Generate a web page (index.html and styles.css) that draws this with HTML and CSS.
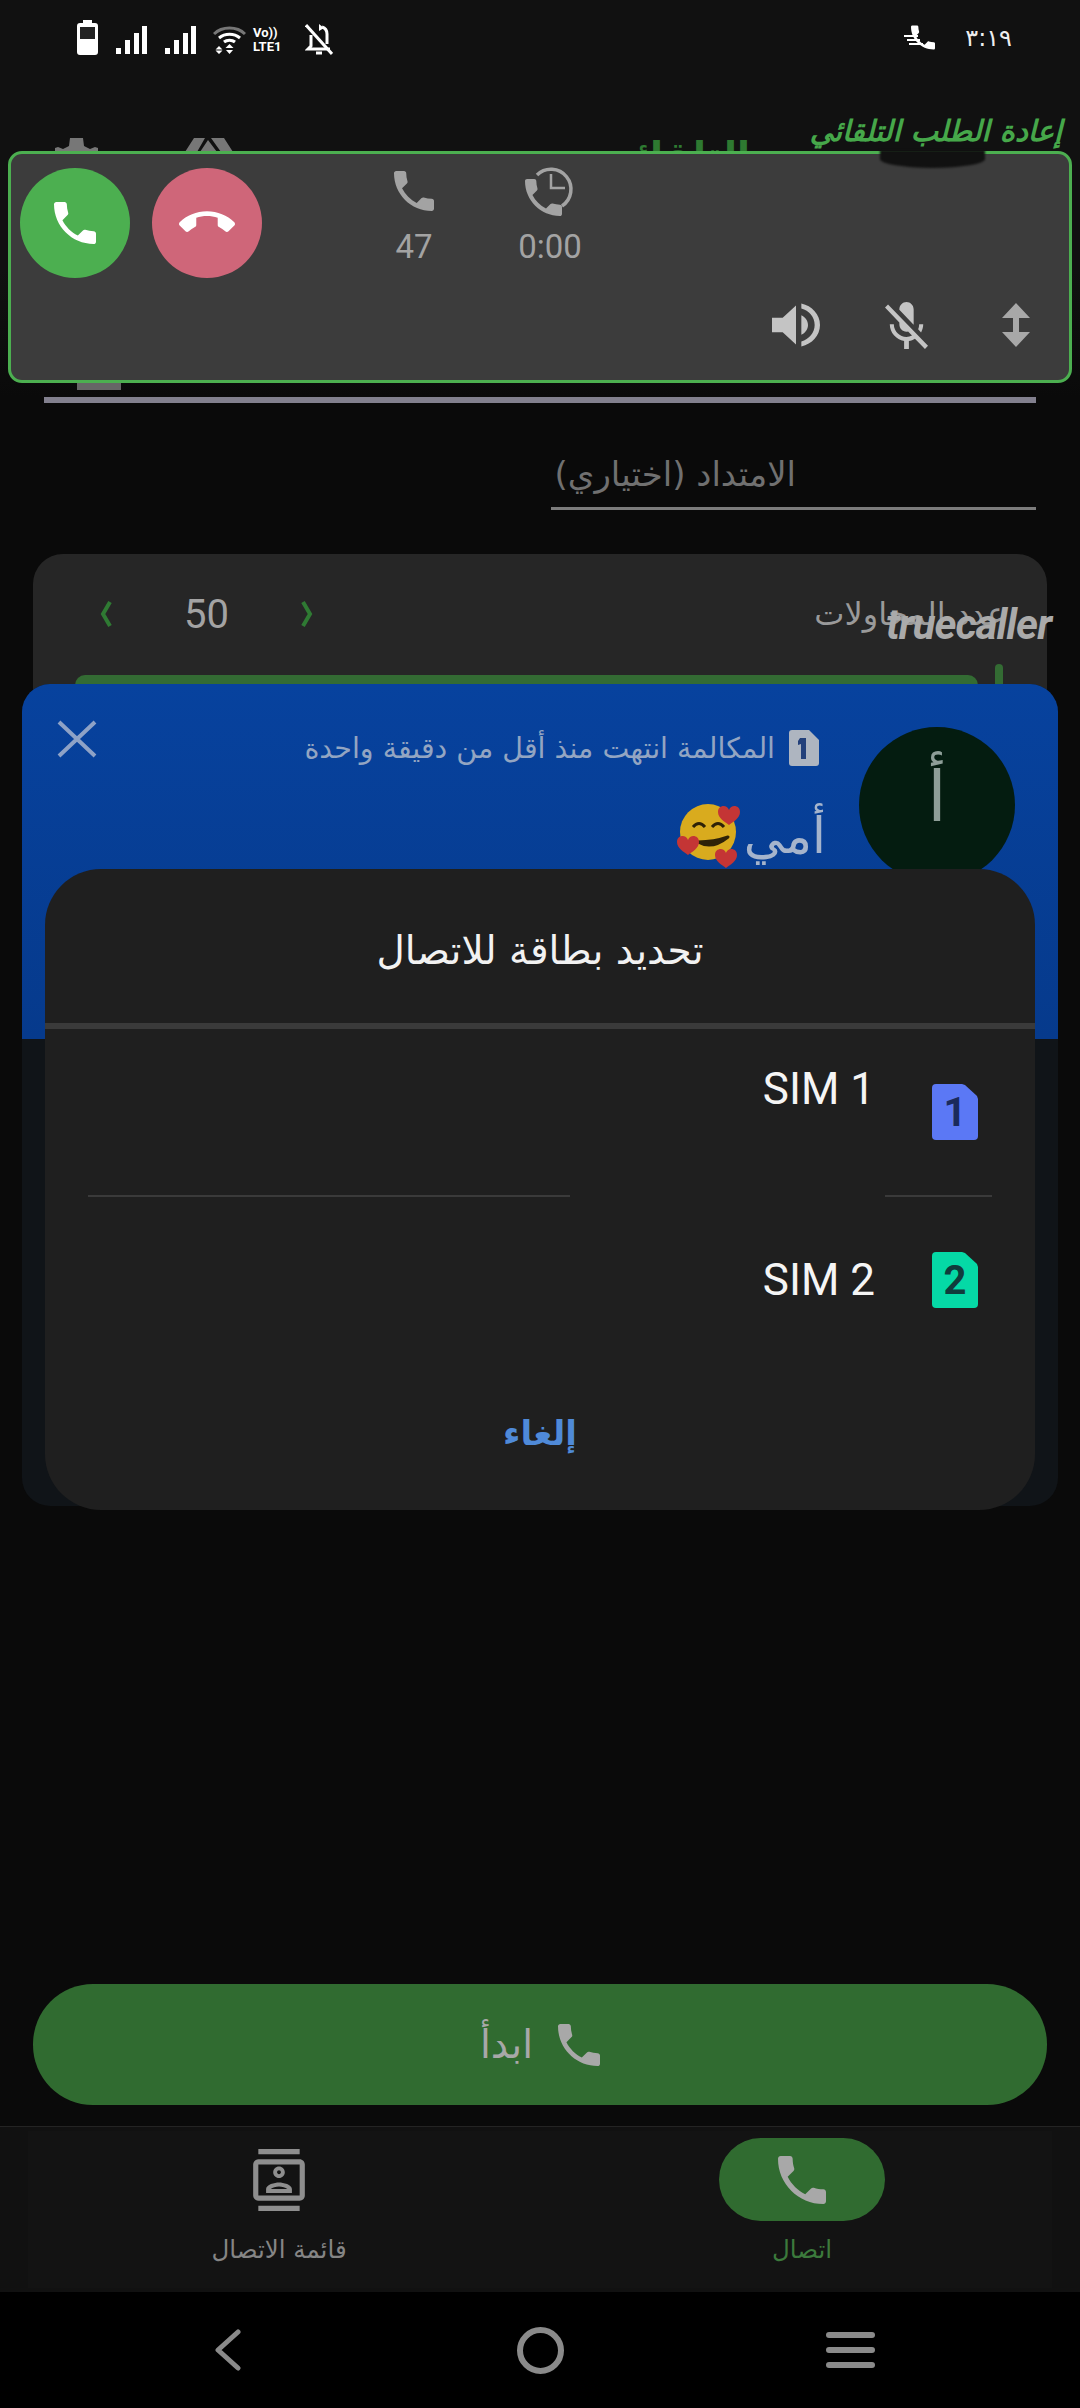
FILE: index.html
```html
<!DOCTYPE html>
<html lang="ar">
<head>
  <meta charset="UTF-8" />
  <title>إعادة الطلب التلقائي</title>
  <link rel="stylesheet" href="styles.css">
</head>
<body>
  <svg class="sprites" width="0" height="0">
    <symbol id="phone" viewBox="3 3 18 18"><path d="M6.62 10.79c1.44 2.83 3.76 5.14 6.59 6.59l2.2-2.2c.27-.27.67-.36 1.02-.24 1.12.37 2.33.57 3.57.57.55 0 1 .45 1 1V20c0 .55-.45 1-1 1-9.39 0-17-7.61-17-17 0-.55.45-1 1-1h3.5c.55 0 1 .45 1 1 0 1.25.2 2.45.57 3.57.11.35.03.74-.25 1.02l-2.2 2.2z"/></symbol>
    <symbol id="heart" viewBox="-12 -11 24 23"><path d="M0-4C-2-10-11-9-11-2-11 4-4 8 0 11 4 8 11 4 11-2 11-9 2-10 0-4z"/></symbol>
  </svg>

  <div class="page">
    <div class="statusbar" dir="ltr">
      <div class="status-icons">
        <svg class="ic-batt" viewBox="0 0 21 35"><path d="M6 0h9v3h3a3 3 0 0 1 3 3v26a3 3 0 0 1-3 3H3a3 3 0 0 1-3-3V6a3 3 0 0 1 3-3h3z" fill="#fff"/><rect x="3" y="7" width="15" height="12" fill="#222"/></svg>
        <svg class="ic-signal" viewBox="0 0 31 28"><path d="M0 22h5v6H0zM9 14h5v14H9zM18 7h5v21h-5zM26 0h5v28h-5z" fill="#fff"/></svg>
        <svg class="ic-signal second" viewBox="0 0 31 28"><path d="M0 22h5v6H0zM9 14h5v14H9zM18 7h5v21h-5zM26 0h5v28h-5z" fill="#fff"/></svg>
        <svg class="ic-wifi" viewBox="0 0 33 28" fill="none" stroke-width="3">
          <path d="M1 8C9 0 24 0 32 8" stroke="#777"/>
          <path d="M6 12c6-5 15-5 21 0M11 16c3-2.500 8-2.500 11 0" stroke="#fff"/>
          <path d="M16.500 18l4 4h-8zM6 20l3.500 3.500h-7zM2.500 24.500h7L6 28zM13 24h7l-3.500 4z" fill="#fff" stroke="none"/>
        </svg>
        <div class="volte"><span>Vo))</span><span>LTE1</span></div>
        <svg class="ic-bell" viewBox="0 0 28 31" fill="none" stroke="#fff" stroke-width="3">
          <path d="M22 20V10c0-3-2-6-5-7M6 11v11l-3 3h22M11 29h6"/><path d="M1 1l26 29"/><path d="M14 0l5 4-5 3z" fill="#fff" stroke="none"/>
        </svg>
      </div>
      <div class="status-right">
        <svg class="ic-fast" viewBox="0 0 31 25">
          <use href="#phone" x="7" y="0" width="24" height="25" fill="#fff"/>
          <path d="M0 11h14M3 15h13M5 19h14" stroke="#fff" stroke-width="2"/>
        </svg>
        <span class="clock">٣:١٩</span>
      </div>
    </div>

    <div class="app-head">
      <div class="app-title">إعادة الطلب التلقائي</div>
      <div class="tools">
        <div class="tools-title">التلقائي</div>
        <div class="tool-shapes" dir="ltr">
          <svg class="tool-gear" viewBox="0 0 43 14"><path fill="#777" d="M0 14V10l3-1 5 2 6-3 1-8h13l1 8 6 3 5-2 3 1v4z"/></svg>
          <svg class="tool-tri" viewBox="0 0 48 14"><path fill="#777" d="M0 14L9 0h11l-8 14zM15 14l8-12 9 12zM26 0h13l9 14H36z"/></svg>
        </div>
      </div>
      <div class="stub-row" dir="ltr"><i class="stub"></i></div>
    </div>
    <div class="number-line"></div>

    <div class="ext-field">الامتداد (اختياري)</div>

    <div class="attempts">
      <div class="attempts-row">
        <span class="attempts-label">عدد المحاولات</span>
        <div class="stepper" dir="ltr">
          <svg viewBox="0 0 12 28" class="chev"><path d="M10 2L3 14l7 12" fill="none" stroke="#2f7a33" stroke-width="4"/></svg>
          <span>50</span>
          <svg viewBox="0 0 12 28" class="chev"><path d="M2 2l7 12-7 12" fill="none" stroke="#2f7a33" stroke-width="4"/></svg>
        </div>
      </div>
      <div class="slider" dir="ltr"><i class="slider-fill"></i><i class="slider-thumb"></i></div>
    </div>

    <div class="start-wrap">
      <button class="start-btn">
        <svg class="ic-start"><use href="#phone" fill="#a8a8a8"/></svg>
        <span>ابدأ</span>
      </button>
    </div>

    <nav class="tabs">
      <div class="tabs-inner">
        <div class="tab call">
          <div class="pill"><svg class="ic-tab-phone"><use href="#phone" fill="#a8a8a8"/></svg></div>
          <span>اتصال</span>
        </div>
        <div class="tab list">
          <div class="tab-icon">
            <svg viewBox="0 0 24 24" class="ic-contacts"><path fill="#8e8e8e" d="M20 0H4v2h16V0zM4 24h16v-2H4v2zM20 4H4c-1.100 0-2 .9-2 2v12c0 1.100.9 2 2 2h16c1.100 0 2-.9 2-2V6c0-1.100-.9-2-2-2zm0 14H4V6h16v12zm-8-6.750c1.240 0 2.250-1.010 2.250-2.250S13.240 6.750 12 6.750 9.750 7.760 9.750 9s1.010 2.250 2.250 2.250zM12 8.250c.41 0 .75.34.75.75s-.34.75-.75.75-.75-.34-.75-.75.34-.75.75-.75zM17 15.500c0-1.670-3.330-2.500-5-2.500s-5 .83-5 2.500V17h10v-1.500zM8.810 15.500c.61-.52 2.030-1 3.190-1 1.170 0 2.590.48 3.200 1H8.810z"/></svg>
          </div>
          <span>قائمة الاتصال</span>
        </div>
      </div>
    </nav>

    <div class="sysnav" dir="ltr">
      <svg class="ic-back" viewBox="0 0 28 42"><path d="M25 3L5 21l20 18" fill="none" stroke="#8a8a8a" stroke-width="5" stroke-linecap="round" stroke-linejoin="round"/></svg>
      <i class="ic-home"></i>
      <div class="ic-menu"><i></i><i></i><i></i></div>
    </div>
  </div>

  <!-- floating call window -->
  <div class="call-window" dir="ltr">
    <i class="smudge"></i>
    <div class="call-top">
      <div class="round green"><svg class="ic-answer"><use href="#phone" fill="#fff"/></svg></div>
      <div class="round red">
        <svg viewBox="0 0 24 24" class="ic-hang"><path fill="#fff" d="M12 9c-1.600 0-3.150.25-4.600.72v3.100c0 .39-.23.74-.56.9-.98.49-1.870 1.120-2.660 1.850-.18.18-.43.28-.7.28-.28 0-.53-.11-.71-.29L.29 13.080c-.18-.17-.29-.42-.29-.7 0-.28.11-.53.29-.71C3.340 8.780 7.460 7 12 7s8.660 1.780 11.710 4.670c.18.18.29.43.29.71 0 .28-.11.53-.29.71l-2.480 2.480c-.18.18-.43.29-.71.29-.27 0-.52-.11-.7-.28-.79-.74-1.690-1.360-2.670-1.850-.33-.16-.56-.5-.56-.9v-3.100C15.150 9.250 13.600 9 12 9z"/></svg>
      </div>
      <div class="stat count">
        <svg class="ic-stat"><use href="#phone" fill="#a3a3a3"/></svg>
        <span>47</span>
      </div>
      <div class="stat time">
        <svg class="ic-clock" viewBox="0 0 52 50">
          <path d="M13 9A20 20 0 1 1 38 40" fill="none" stroke="#a3a3a3" stroke-width="3.500"/>
          <path d="M27 8v14h14" fill="none" stroke="#a3a3a3" stroke-width="2.500"/>
          <use href="#phone" x="1" y="13" width="37" height="37" fill="#a3a3a3"/>
        </svg>
        <span>0:00</span>
      </div>
    </div>
    <div class="call-bottom">
      <svg class="ic-speaker" viewBox="3 3 18 18" preserveAspectRatio="none"><path fill="#c4c4c4" d="M3 9v6h4l5 5V4L7 9H3zm13.500 3c0-1.770-1.020-3.290-2.500-4.030v8.050c1.480-.73 2.500-2.250 2.500-4.020zM14 3.230v2.060c2.890.86 5 3.540 5 6.710s-2.110 5.850-5 6.710v2.060c4.010-.91 7-4.490 7-8.770s-2.990-7.860-7-8.770z"/></svg>
      <svg class="ic-mic" viewBox="3 2 18 19" preserveAspectRatio="none"><path fill="#c4c4c4" d="M19 11h-1.700c0 .74-.16 1.430-.43 2.050l1.230 1.230c.56-.98.9-2.090.9-3.280zm-4.020.17c0-.06.02-.11.02-.17V5c0-1.660-1.340-3-3-3S9 3.340 9 5v.18l5.980 5.990zM4.270 3L3 4.270l6.010 6.010V11c0 1.660 1.330 3 2.990 3 .22 0 .44-.03.65-.08l1.660 1.660c-.71.33-1.500.52-2.310.52-2.760 0-5.300-2.100-5.300-5.100H5c0 3.410 2.720 6.230 6 6.720V21h2v-3.280c.91-.13 1.770-.45 2.540-.9L19.730 21 21 19.730 4.270 3z"/></svg>
      <svg class="ic-updown" viewBox="0 0 28 44"><path fill="#a8a8a8" d="M14 0l14 15H17v14h11L14 44 0 29h11V15H0z"/></svg>
    </div>
  </div>

  <div class="brand" dir="ltr">truecaller</div>

  <!-- caller id popup -->
  <div class="caller-popup">
    <div class="caller-blue">
      <div class="avatar">أ</div>
      <div class="caller-info">
        <div class="caller-meta">
          <svg class="ic-minisim" viewBox="0 0 30 36"><path fill="#aeb5c0" d="M3 0h17l10 10v23a3 3 0 0 1-3 3H3a3 3 0 0 1-3-3V3a3 3 0 0 1 3-3z"/><path fill="#23407a" d="M11 8h6v21h-5V14l-3 1v-4z"/></svg>
          <span>المكالمة انتهت منذ أقل من دقيقة واحدة</span>
        </div>
        <div class="caller-name">
          <span>أمي</span>
          <svg class="emoji" viewBox="0 0 66 66">
            <circle cx="32" cy="29" r="28" fill="#d9ab1e"/>
            <path d="M17 24q6-7 12 0M36 24q6-7 12 0" fill="none" stroke="#2e2208" stroke-width="3"/>
            <path d="M22 39q14 8 30-5q-14 5-30 5z" fill="#2e2208" stroke="#2e2208" stroke-width="3" stroke-linejoin="round"/>
            <use href="#heart" x="41" y="0" width="24" height="23" fill="#c43535"/>
            <use href="#heart" x="0" y="30" width="24" height="23" fill="#c43535"/>
            <use href="#heart" x="38" y="43" width="24" height="23" fill="#c43535"/>
          </svg>
        </div>
      </div>
      <svg class="ic-close" viewBox="0 0 40 38"><path d="M2 2l36 34M38 2L2 36" stroke="#8ea2c6" stroke-width="4" fill="none"/></svg>
    </div>
  </div>

  <!-- sim picker -->
  <div class="sim-dialog">
    <div class="sim-title">تحديد بطاقة للاتصال</div>
    <div class="sim-rule"></div>
    <div class="sim-row first">
      <svg class="ic-sim" viewBox="0 0 46 56"><path fill="#5b78f5" d="M4 0h26l3 1 12 11 1 3v37a4 4 0 0 1-4 4H4a4 4 0 0 1-4-4V4a4 4 0 0 1 4-4z"/></svg>
      <b class="sim-num">1</b>
      <span class="sim-name">SIM 1</span>
    </div>
    <div class="sim-split"><i></i><i></i></div>
    <div class="sim-row second">
      <svg class="ic-sim" viewBox="0 0 46 56"><path fill="#05d9a6" d="M4 0h26l3 1 12 11 1 3v37a4 4 0 0 1-4 4H4a4 4 0 0 1-4-4V4a4 4 0 0 1 4-4z"/></svg>
      <b class="sim-num">2</b>
      <span class="sim-name">SIM 2</span>
    </div>
    <div class="sim-cancel">إلغاء</div>
  </div>
</body>
</html>
```

FILE: styles.css
```css
* {
  box-sizing: border-box;
}
body {
  margin: 0;
  width: 1080px;
  height: 2408px;
  position: relative;
  overflow: hidden;
  background: #0a0a0a;
  font-family: Roboto, "DejaVu Sans", sans-serif;
  direction: rtl;
  color: #999;
}
.sprites {
  position: absolute;
}
i {
  display: block;
}
svg {
  display: block;
}
.page {
  height: 2408px;
  display: flex;
  flex-direction: column;
}

/* status bar */
.statusbar {
  height: 80px;
  background: #111;
  display: flex;
  justify-content: space-between;
  align-items: flex-start;
  padding: 20px 68px 0 77px;
}
.status-icons {
  display: flex;
  align-items: center;
  height: 35px;
}
.ic-batt {
  width: 21px;
  height: 35px;
}
.ic-signal {
  width: 31px;
  height: 28px;
  margin-left: 18px;
  margin-top: 4px;
}
.ic-signal.second {
  margin-left: 18px;
}
.ic-wifi {
  width: 33px;
  height: 28px;
  margin-left: 17px;
  margin-top: 4px;
}
.volte {
  width: 36px;
  margin-left: 7px;
  margin-top: 4px;
  display: flex;
  flex-direction: column;
  font: bold 13px/14px Roboto, sans-serif;
  color: #fff;
  white-space: nowrap;
}
.ic-bell {
  width: 28px;
  height: 31px;
  margin-left: 16px;
  margin-top: 4px;
}
.status-right {
  display: flex;
  align-items: center;
  gap: 30px;
  height: 35px;
}
.ic-fast {
  width: 31px;
  height: 25px;
}
.clock {
  font: 24px "DejaVu Sans", sans-serif;
  color: #eee;
}

/* page behind the overlays */
.app-head {
  height: 317px;
  background: linear-gradient(#111 60%, #0a0a0a);
  display: flex;
  flex-direction: column;
}
.app-title {
  height: 58px;
  padding: 36px 18px 0 0;
  font: italic bold 29px/30px "DejaVu Sans", sans-serif;
  color: #46a84a;
  white-space: nowrap;
}
.tools {
  display: flex;
  justify-content: space-between;
  padding: 0 330px 0 55px;
  height: 30px;
}
.tools-title {
  font: bold 38px/36px "DejaVu Sans", sans-serif;
  color: #2e7a31;
}
.tool-shapes {
  display: flex;
  gap: 87px;
}
.tool-gear {
  width: 43px;
  height: 14px;
}
.tool-tri {
  width: 48px;
  height: 14px;
}
.stub-row {
  margin-top: auto;
  padding: 0 0 7px 77px;
  display: flex;
}
.stub {
  width: 44px;
  height: 8px;
  background: #666;
}
.number-line {
  height: 6px;
  margin: 0 44px;
  background: #82808e;
}
.ext-field {
  width: 485px;
  margin: 49px 44px 0 0;
  height: 58px;
  border-bottom: 3px solid #7c7c7c;
  font: 34px/44px "DejaVu Sans", sans-serif;
  color: #707070;
  padding-right: 240px;
  white-space: nowrap;
}
.attempts {
  margin: 44px 33px 0;
  height: 450px;
  background: #262626;
  border-radius: 30px;
  padding: 30px 41px 0 67px;
}
.attempts-row {
  display: flex;
  justify-content: space-between;
  align-items: center;
  height: 60px;
}
.attempts-label {
  font: 32px "DejaVu Sans", sans-serif;
  color: #9a9a9a;
}
.stepper {
  display: flex;
  align-items: center;
  gap: 72px;
  font-size: 40px;
  color: #a3a3a3;
}
.chev {
  width: 12px;
  height: 28px;
}
.slider {
  display: flex;
  gap: 17px;
  margin: 20px -1px 0 -25px;
  align-items: flex-start;
}
.slider-fill {
  width: 903px;
  height: 40px;
  margin-top: 11px;
  background: #336b33;
  border-radius: 10px 10px 0 0;
}
.slider-thumb {
  width: 8px;
  height: 40px;
  background: #336b33;
  border-radius: 4px;
}
.start-wrap {
  margin-top: auto;
  padding: 0 33px 21px;
}
.start-btn {
  width: 100%;
  height: 121px;
  border: none;
  border-radius: 60px;
  background: #306b30;
  display: flex;
  justify-content: center;
  align-items: center;
  gap: 25px;
  direction: rtl;
  font: 39px "DejaVu Sans", sans-serif;
  color: #a8a8a8;
}
.ic-start {
  width: 42px;
  height: 42px;
}

/* bottom tabs */
.tabs {
  height: 166px;
  background: #111;
  border-top: 1px solid #242424;
  padding: 4px 28px;
}
.tabs-inner {
  height: 157px;
  background: #131313;
  display: grid;
  grid-template-columns: 1fr 1fr;
}
.tab {
  display: flex;
  flex-direction: column;
  align-items: center;
  padding-top: 7px;
  font: 24.500px "DejaVu Sans", sans-serif;
  color: #858585;
  white-space: nowrap;
}
.tab.call {
  padding-left: 12px;
  color: #3c7a3c;
}
.tab.list {
  padding-right: 10px;
}
.pill {
  width: 166px;
  height: 83px;
  border-radius: 42px;
  background: #306b30;
  display: flex;
  align-items: center;
  justify-content: center;
  margin-bottom: 14px;
}
.tab-icon {
  height: 83px;
  margin-bottom: 14px;
  display: flex;
  align-items: center;
}
.ic-tab-phone {
  width: 48px;
  height: 48px;
}
.ic-contacts {
  width: 62px;
  height: 64px;
}
.sysnav {
  height: 116px;
  background: #000;
  display: flex;
  align-items: center;
  padding-left: 213px;
}
.ic-back {
  width: 28px;
  height: 42px;
}
.ic-home {
  width: 47px;
  height: 47px;
  margin-left: 276px;
  border: 6px solid #8a8a8a;
  border-radius: 50%;
}
.ic-menu {
  width: 49px;
  margin-left: 262px;
  display: flex;
  flex-direction: column;
  gap: 9px;
}
.ic-menu i {
  height: 6px;
  border-radius: 3px;
  background: #8a8a8a;
}

/* call window */
.call-window {
  position: absolute;
  left: 8px;
  top: 151px;
  width: 1064px;
  height: 232px;
  background: #3c3c3c;
  border: 3px solid #4caf50;
  border-radius: 14px;
  padding: 14px 58px 0 9px;
  display: flex;
  flex-direction: column;
}
.smudge {
  position: absolute;
  left: 869px;
  top: -4px;
  width: 105px;
  height: 18px;
  background: #111;
  border-radius: 0 0 50% 50%;
  filter: blur(1px);
}
.call-top {
  display: flex;
  height: 110px;
}
.round {
  width: 110px;
  height: 110px;
  border-radius: 50%;
  display: flex;
  align-items: center;
  justify-content: center;
}
.round.green {
  background: #4caf50;
}
.round.red {
  background: #cf6679;
  margin-left: 22px;
}
.ic-answer {
  width: 42px;
  height: 42px;
}
.ic-hang {
  width: 56px;
  height: 56px;
}
.stat {
  display: flex;
  flex-direction: column;
  align-items: center;
  font-size: 33px;
  color: #a3a3a3;
  width: 68px;
  margin-top: -2px;
}
.stat span {
  line-height: 36px;
}
.stat.count {
  margin-left: 127px;
  width: 50px;
  padding-top: 5px;
}
.stat.count span {
  margin-top: 18px;
}
.stat.time {
  margin-left: 77px;
}
.stat.time span {
  margin-top: 13px;
}
.ic-stat {
  width: 40px;
  height: 40px;
  flex: none;
}
.ic-clock {
  width: 52px;
  height: 50px;
  flex: none;
}
.call-bottom {
  display: flex;
  justify-content: flex-end;
  align-items: center;
  gap: 65px;
  height: 48px;
  margin: 23px -19px 0 0;
}
.ic-speaker {
  width: 48px;
  height: 44px;
}
.ic-mic {
  width: 43px;
  height: 47px;
}
.ic-updown {
  width: 28px;
  height: 44px;
  margin-left: 9px;
}
.brand {
  position: absolute;
  left: 886px;
  top: 605px;
  font: italic bold 42px/40px Roboto, sans-serif;
  letter-spacing: -1px;
  color: #aaa;
}

/* popup */
.caller-popup {
  position: absolute;
  left: 22px;
  top: 684px;
  width: 1036px;
  height: 822px;
  background: #101418;
  border-radius: 28px;
  overflow: hidden;
}
.caller-blue {
  height: 355px;
  background: linear-gradient(#07429e, #063a8c);
  display: flex;
  padding: 43px 43px 0 35px;
  align-items: flex-start;
}
.avatar {
  width: 156px;
  height: 156px;
  flex: none;
  border-radius: 50%;
  background: #041c10;
  color: #8e9e98;
  font: 70px/140px "DejaVu Sans", sans-serif;
  text-align: center;
}
.caller-info {
  flex: 1;
  padding-right: 40px;
}
.caller-meta {
  display: flex;
  align-items: center;
  gap: 14px;
  margin-top: 3px;
  font: 28.500px "DejaVu Sans", sans-serif;
  color: #93a5c2;
  white-space: nowrap;
}
.ic-minisim {
  width: 30px;
  height: 36px;
}
.caller-name {
  display: flex;
  align-items: center;
  gap: 2px;
  margin: 37px -7px 0 0;
  font: 50px/66px "DejaVu Sans", sans-serif;
  color: #a5b4cc;
}
.emoji {
  width: 66px;
  height: 66px;
}
.ic-close {
  width: 40px;
  height: 38px;
  flex: none;
  margin-top: -7px;
}

/* sim dialog */
.sim-dialog {
  position: absolute;
  left: 45px;
  top: 869px;
  width: 990px;
  height: 641px;
  background: #1f1f1f;
  border-radius: 56px;
  display: flex;
  flex-direction: column;
}
.sim-title {
  height: 154px;
  padding-top: 8px;
  display: flex;
  align-items: center;
  justify-content: center;
  font: 39px "DejaVu Sans", sans-serif;
  color: #f2f2f2;
}
.sim-rule {
  height: 6px;
  background: #3a3a3a;
}
.sim-row {
  height: 166px;
  display: flex;
  align-items: center;
  padding-right: 57px;
  position: relative;
}
.ic-sim {
  width: 46px;
  height: 56px;
}
.sim-num {
  position: absolute;
  right: 57px;
  width: 46px;
  text-align: center;
  font: bold 40px Roboto, sans-serif;
  color: #1a2a5c;
  top: 50%;
  margin-top: -23px;
}
.sim-row.second .sim-num {
  color: #103c3c;
}
.sim-name {
  margin-right: 57px;
  font-size: 44px;
  color: #f5f5f5;
  direction: ltr;
}
.sim-row.first .sim-name {
  margin-bottom: 46px;
}
.sim-split {
  display: flex;
  justify-content: space-between;
  padding: 0 43px;
  height: 2px;
}
.sim-split i {
  background: #3a3a3a;
  width: 107px;
}
.sim-split i:last-child {
  width: 482px;
}
.sim-cancel {
  margin-top: 50px;
  text-align: center;
  font: bold 34px "DejaVu Sans", sans-serif;
  color: #4f8ad8;
}
```
